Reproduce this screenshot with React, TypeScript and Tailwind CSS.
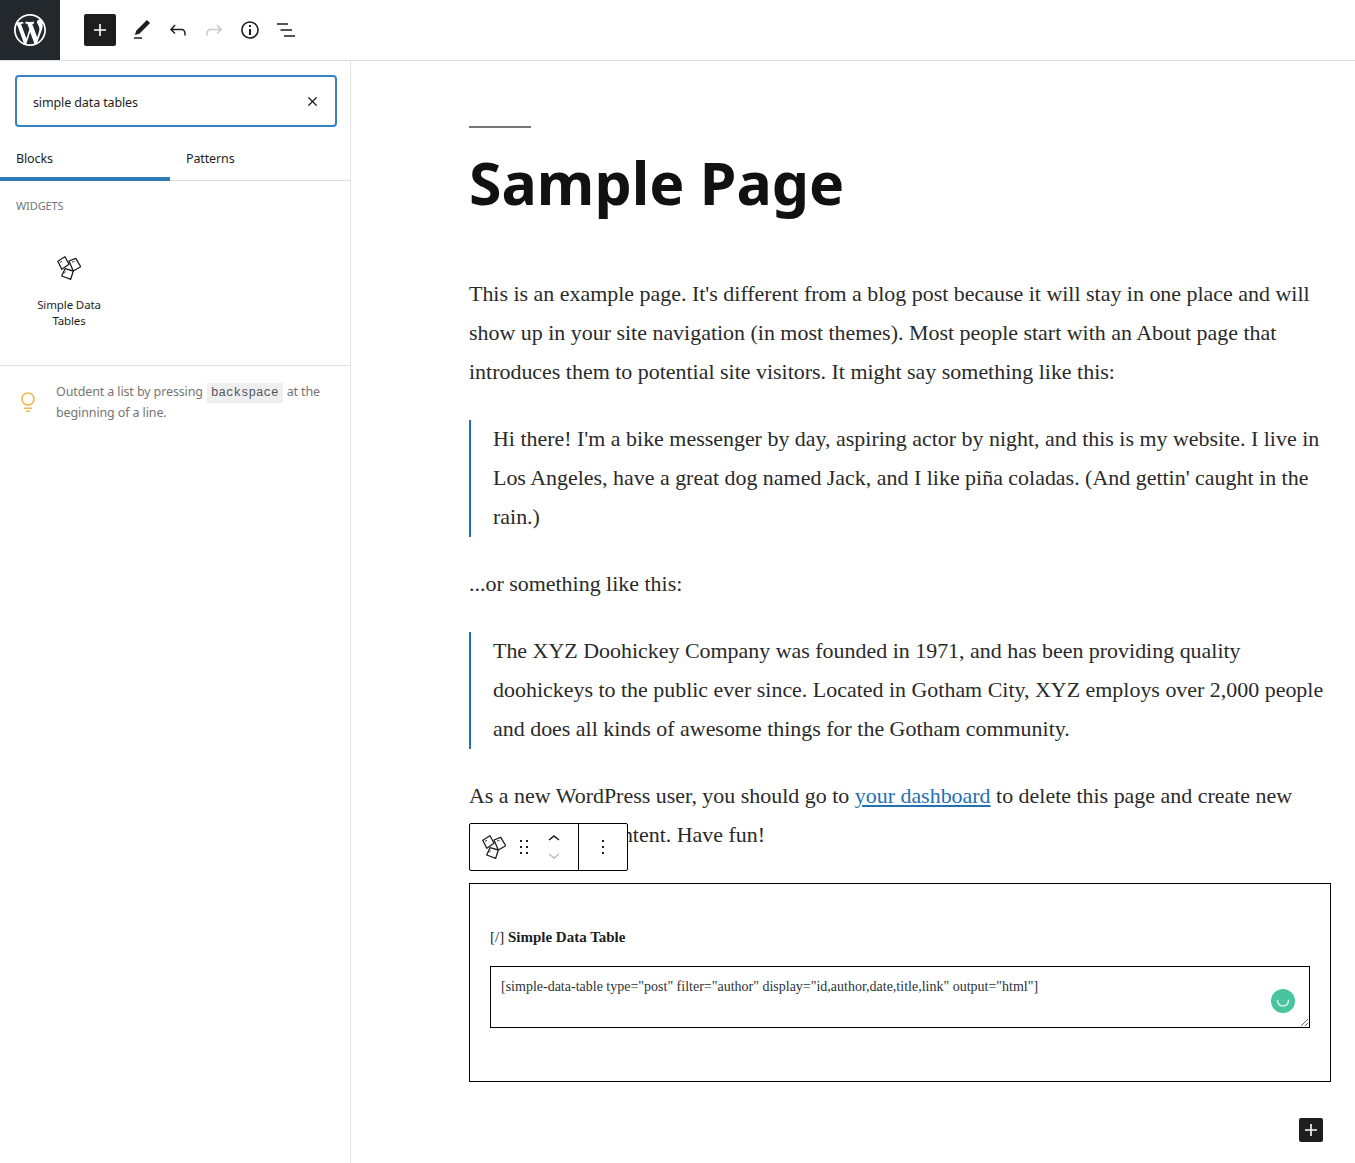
import { X } from 'lucide-react'

const uiFont = "font-['Noto_Sans',sans-serif]"

const CubesIcon = ({ className = '' }: { className?: string }) => (
  <svg viewBox="0 0 24 24" width="24" height="24" className={className} fill="none" stroke="#1e1e1e" strokeWidth="1.3" strokeLinejoin="round">
    <path d="M0.8 5.2L8 0.8l4 7.5-7.2 5z" />
    <path d="M12 5l6.7-2.7 5 8.4-7.4 4.3z" />
    <path d="M8 12.7l8.3 2.3-2.6 8.3-9-3.3z" />
    <path d="M3 6.5c.6-.6 1.2-1 2-1.2M15 6.2c1-.6 1.8-.8 2.6-.6M7 17.5c.4-.8 1-1.4 1.8-1.8" strokeWidth="0.9" />
  </svg>
)

const WpLogo = () => (
  <svg viewBox="0 0 20 20" width="32" height="32" fill="#fff">
    <path d="M20 10c0-5.51-4.49-10-10-10C4.48 0 0 4.49 0 10c0 5.52 4.48 10 10 10 5.51 0 10-4.48 10-10zM7.78 15.37L4.37 6.22c.55-.02 1.17-.08 1.17-.08.5-.06.44-1.13-.06-1.11 0 0-1.45.11-2.37.11-.18 0-.37 0-.58-.01C4.12 2.69 6.87 1.11 10 1.11c2.33 0 4.45.87 6.05 2.34-.68-.11-1.65.39-1.65 1.58 0 .74.45 1.36.9 2.1.35.61.55 1.36.55 2.46 0 1.49-1.4 5-1.4 5l-3.03-8.37c.54-.02.82-.17.82-.17.5-.05.44-1.25-.06-1.22 0 0-1.44.12-2.38.12-.87 0-2.33-.12-2.33-.12-.5-.03-.56 1.2-.06 1.22l.92.08 1.26 3.41zM17.41 10c.24-.64.74-1.87.43-4.25.7 1.29 1.05 2.71 1.05 4.25 0 3.29-1.73 6.24-4.4 7.78.97-2.59 1.94-5.2 2.92-7.78zM6.1 18.09C3.12 16.65 1.11 13.53 1.11 10c0-1.3.23-2.48.72-3.59C3.25 10.3 4.67 14.2 6.1 18.09zm4.03-6.63l2.58 6.98c-.86.29-1.76.45-2.71.45-.79 0-1.57-.11-2.29-.33.81-2.38 1.62-4.74 2.42-7.1z" />
  </svg>
)

const Icon = ({ d, fill = '#1e1e1e' }: { d: string; fill?: string }) => (
  <svg viewBox="0 0 24 24" width="24" height="24" fill={fill}>
    <path d={d} />
  </svg>
)

const plusPath = 'M18 11.2h-5.2V6h-1.6v5.2H6v1.6h5.2V18h1.6v-5.2H18z'

const Header = () => (
  <header className="flex h-[61px] shrink-0 items-center border-b border-[#e0e0e0] bg-white">
    <div className="flex h-[60px] w-[60px] items-center justify-center bg-[#23282d]">
      <WpLogo />
    </div>
    <div className="ml-6 flex h-8 w-8 items-center justify-center rounded-[2px] bg-[#1e1e1e]">
      <Icon fill="#fff" d={plusPath} />
    </div>
    <div className="ml-[14px] flex items-center gap-3">
      <Icon d="M20.1 5.1L16.9 2 6.2 12.7l-1.3 4.4 4.5-1.3L20.1 5.1zM4 20.8h8v-1.5H4v1.5z" />
      <Icon d="M18.3 11.7c-.6-.6-1.4-.9-2.3-.9H6.7l2.9-3.3-1.1-1-4.5 5L8.5 16l1-1-2.7-2.7H16c.5 0 .9.2 1.3.5 1 1 1 3.4 1 4.5v.3h1.5v-.2c0-1.5 0-4.3-1.5-5.7z" />
      <Icon fill="#c8c8c8" d="M15.6 6.5l-1.1 1 2.9 3.3H8c-.9 0-1.7.3-2.3.9-1.4 1.5-1.4 4.2-1.4 5.6v.2h1.5v-.3c0-1.1 0-3.5 1-4.5.3-.3.7-.5 1.3-.5h9.2L14.5 15l1.1 1.1 4.6-4.6-4.6-5z" />
      <Icon d="M12 3.2c-4.8 0-8.8 3.9-8.8 8.8 0 4.8 3.9 8.8 8.8 8.8 4.8 0 8.8-3.9 8.8-8.8 0-4.8-4-8.8-8.8-8.8zm0 16c-4 0-7.2-3.3-7.2-7.2C4.8 8 8 4.8 12 4.8s7.2 3.3 7.2 7.2c0 4-3.2 7.2-7.2 7.2zM11 17h2v-6h-2v6zm0-8h2V7h-2v2z" />
      <Icon d="M3 5.2h11v1.5H3zM6.5 11.2H18v1.5H6.5zM10 17.2h11v1.5H10z" />
    </div>
  </header>
)

const Sidebar = () => (
  <aside className={`flex w-[351px] shrink-0 flex-col border-r border-[#e0e0e0] bg-white text-[12.5px] tracking-[-0.12px] text-[#1e1e1e] ${uiFont}`}>
    <div className="pl-[15px] pr-[13px] pt-[14px]">
      <div className="flex h-[52px] items-center justify-between rounded-[4px] border-2 border-[#3582c4] pl-4 pr-[14px]">
        <span className="pt-[5px]">simple data tables</span>
        <X size={15} strokeWidth={2} className="mr-[1px]" />
      </div>
    </div>
    <div className="mt-[12px] flex h-[42px] border-b border-[#dcdcdc]">
      <div className="-mb-px flex w-[170px] items-center border-b-4 border-[#2c7ab8] pl-4 pt-[3px]">Blocks</div>
      <div className="flex items-center pl-4 pb-[1px]">Patterns</div>
    </div>
    <div className="h-[185px] border-b border-[#e0e0e0] px-4 pt-[17px]">
      <div className="text-[11px] leading-4 text-[#6c7781]">WIDGETS</div>
      <div className="mt-[42px] flex w-[106px] flex-col items-center">
        <CubesIcon />
      </div>
      <div className="mt-[17px] flex w-[106px] flex-col items-center text-center text-[11.5px] leading-4">
        Simple Data
        <br />
        Tables
      </div>
    </div>
    <div className="flex gap-4 px-4 pt-[16px] text-[#757575]">
      <svg viewBox="0 0 24 24" width="24" height="24" fill="#f0b849" className="mt-[8px] shrink-0">
        <path d="M12 15.8c-3.7 0-6.8-3-6.8-6.8s3-6.8 6.8-6.8c3.7 0 6.8 3 6.8 6.8s-3.1 6.8-6.8 6.8zm0-12C9.1 3.8 6.8 6.1 6.8 9s2.4 5.2 5.2 5.2c2.9 0 5.2-2.4 5.2-5.2S14.9 3.8 12 3.8zM8 17.5h8V19H8zM10 20.5h4V22h-4z" />
      </svg>
      <p className="w-[272px] leading-5">
        Outdent a list by pressing{' '}
        <span className="mx-[1px] inline-block h-5 bg-[#efefef] px-1 font-['Liberation_Mono',monospace] text-[12.5px] leading-5 tracking-normal text-[#50575e]">backspace</span>{' '}
        at the beginning of a line.
      </p>
    </div>
  </aside>
)

const BlockToolbar = () => (
  <div className="absolute -top-[60px] left-0 flex h-[48px] w-[159px] rounded-[2px] border border-black bg-white">
    <div className="flex w-[109px] items-center border-r border-black pl-3">
      <CubesIcon />
      <svg viewBox="0 0 24 24" width="24" height="24" fill="#1e1e1e" className="ml-[6px]">
        <path d="M8 7h2V5H8v2zm0 6h2v-2H8v2zm0 6h2v-2H8v2zm6-14v2h2V5h-2zm0 8h2v-2h-2v2zm0 6h2v-2h-2v2z" />
      </svg>
      <div className="ml-[6px] flex flex-col">
        <svg viewBox="0 4 24 16" width="24" height="16" fill="#1e1e1e">
          <path d="M6.5 12.4L12 8l5.5 4.4-.9 1.2L12 10l-4.5 3.6-1-1.2z" />
        </svg>
        <svg viewBox="0 4 24 16" width="24" height="16" fill="#c0c0c0">
          <path d="M17.5 11.6L12 16l-5.5-4.4.9-1.2L12 14l4.5-3.6 1 1.2z" />
        </svg>
      </div>
    </div>
    <div className="flex flex-1 items-center justify-center">
      <Icon d="M13 19h-2v-2h2v2zm0-6h-2v-2h2v2zm0-6h-2V5h2v2z" />
    </div>
  </div>
)

const ShortcodeBlock = () => (
  <div className="relative mt-7">
    <BlockToolbar />
    <div className="h-[199px] border border-black px-5 pt-[37px] font-['Liberation_Serif',serif] text-[#1e1e1e]">
      <div className="text-[15px] leading-[32px]">
        [/] <b>Simple Data Table</b>
      </div>
      <div className="relative mt-[13px]">
        <textarea
          readOnly
          value={'[simple-data-table type="post" filter="author" display="id,author,date,title,link" output="html"]'}
          className="block h-[62px] w-full resize-y rounded-none border border-black px-[10px] py-[10px] text-[14px] leading-[20px] text-[#2c3338] outline-none"
        />
        <div className="absolute right-[15px] top-[23px] flex h-6 w-6 items-center justify-center rounded-full bg-[#48c59c]">
          <svg viewBox="0 0 24 24" width="24" height="24" fill="none" stroke="#d8f3ea" strokeWidth="1.6" strokeLinecap="round">
            <path d="M6.5 11.5c.4 3.5 2.6 5.5 5.5 5.5s5.2-2 5.5-5.5" />
          </svg>
        </div>
      </div>
    </div>
  </div>
)

const Editor = () => (
  <main className="min-w-0 flex-1 bg-white">
    <div className="ml-[118px] mr-6 pt-[65px] font-['Liberation_Serif',serif] text-[21.95px] leading-[39px] text-[#2a2a2a]">
      <div className="h-[2px] w-[62px] bg-[#767676]" />
      <h1 className={`mt-[14px] text-[59px] leading-[80px] font-bold text-[#111] ${uiFont}`}>Sample Page</h1>
      <p className="mt-[52px]">
        This is an example page. It's different from a blog post because it will stay in one place and will show up in your site navigation (in most themes). Most people start with an About page that introduces them to potential site visitors. It might say something like this:
      </p>
      <blockquote className="mt-[29px] border-l-2 border-[#2271b1] pl-[22px]">
        <div className="-translate-y-px">
          Hi there! I'm a bike messenger by day, aspiring actor by night, and this is my website. I live in Los Angeles, have a great dog named Jack, and I like piña coladas. (And gettin' caught in the rain.)
        </div>
      </blockquote>
      <p className="mt-7 -translate-y-px">...or something like this:</p>
      <blockquote className="mt-7 border-l-2 border-[#2271b1] pl-[22px]">
        <div className="-translate-y-px">
          The XYZ Doohickey Company was founded in 1971, and has been providing quality doohickeys to the public ever since. Located in Gotham City, XYZ employs over 2,000 people and does all kinds of awesome things for the Gotham community.
        </div>
      </blockquote>
      <p className="mt-7 -translate-y-px">
        As a new WordPress user, you should go to <a href="#" className="text-[#2271b1] underline">your dashboard</a> to delete this page and create new pages for your content. Have fun!
      </p>
      <ShortcodeBlock />
      <div className="mt-9 flex justify-end pr-2">
        <div className="flex h-6 w-6 items-center justify-center rounded-[2px] bg-[#1e1e1e]">
          <Icon fill="#fff" d={plusPath} />
        </div>
      </div>
    </div>
  </main>
)

const App = () => (
  <div className="flex h-[1163px] flex-col overflow-hidden bg-white">
    <Header />
    <div className="flex min-h-0 flex-1">
      <Sidebar />
      <Editor />
    </div>
  </div>
)

export default App
